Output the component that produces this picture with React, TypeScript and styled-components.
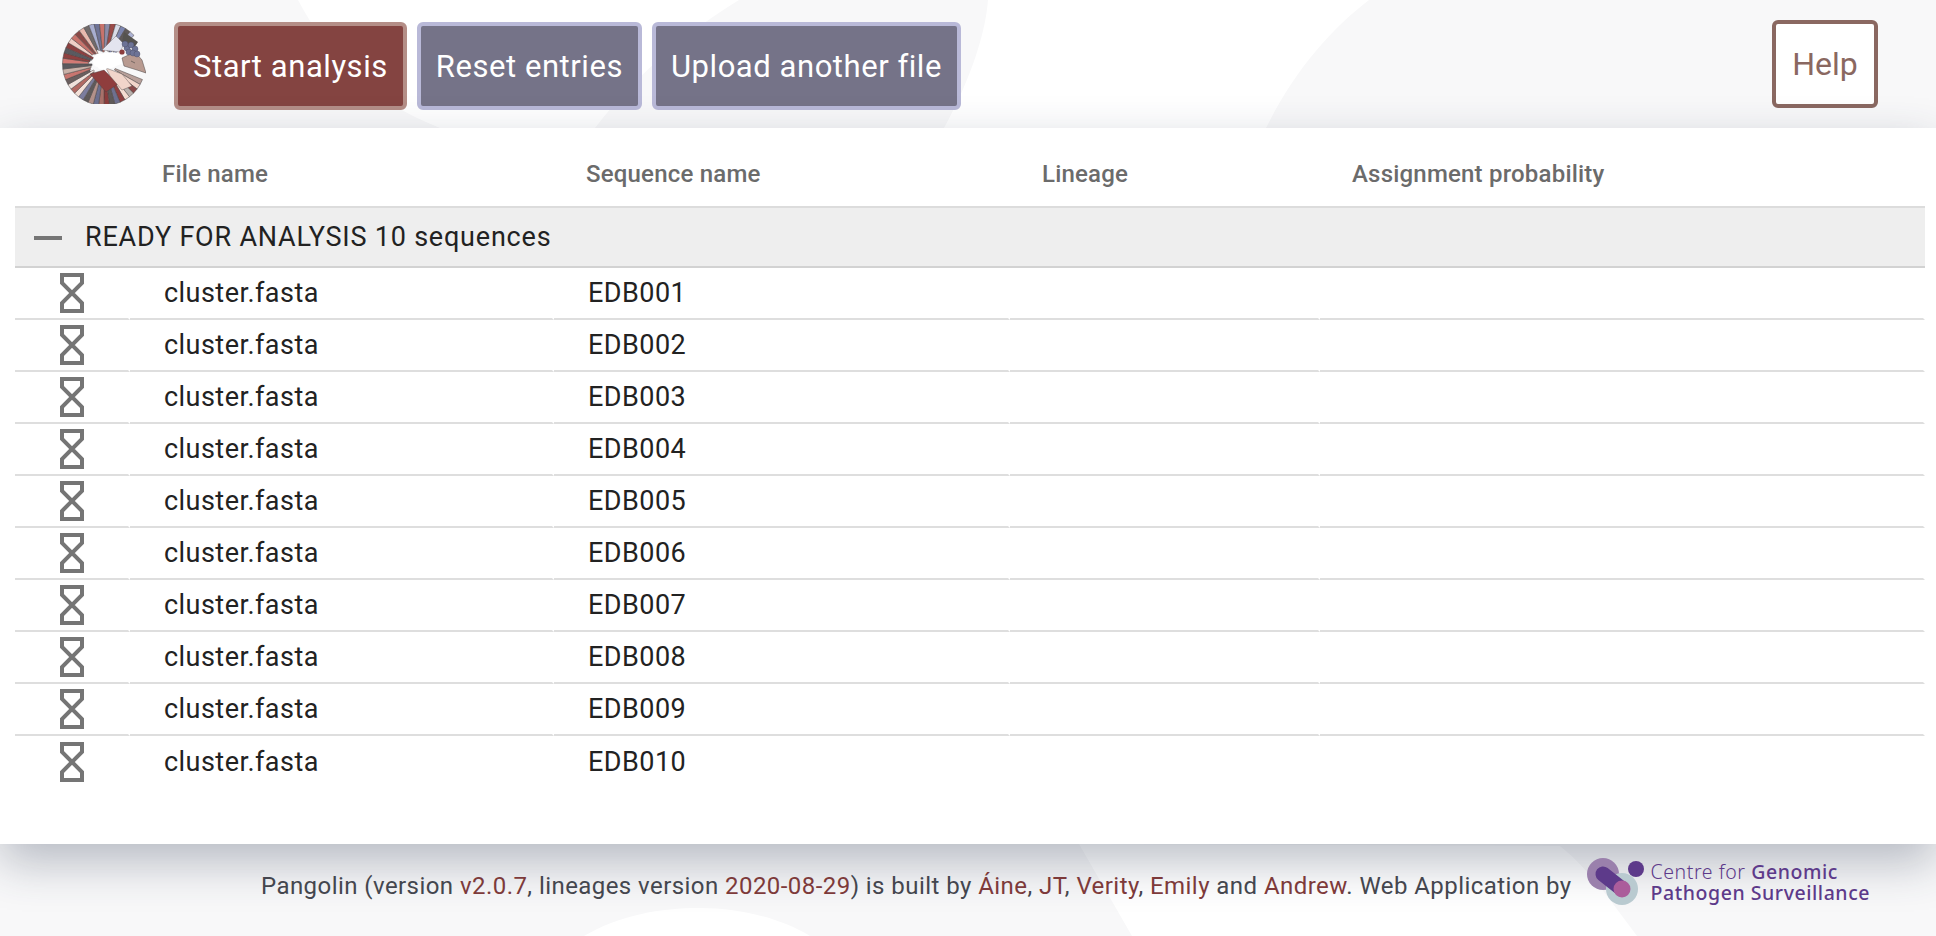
import React from "react";
import styled, { createGlobalStyle } from "styled-components";

const Global = createGlobalStyle`
  html, body { margin: 0; padding: 0; background: #fff; overflow: hidden; }
  body { font-family: Roboto, "Liberation Sans", sans-serif; }
`;

const Page = styled.div`
  position: relative;
  width: 1936px;
  height: 936px;
  display: flex;
  flex-direction: column;
  overflow: hidden;
`;

const Backdrop = styled.svg`
  position: absolute;
  inset: 0;
  width: 1936px;
  height: 936px;
`;

const Header = styled.header`
  position: relative;
  height: 128px;
  flex: none;
  display: flex;
  align-items: flex-start;
  padding: 22px 58px 0 62px;
  box-sizing: border-box;
`;

const LogoWrap = styled.div`
  width: 84px;
  height: 80px;
  margin: 2px 28px 0 0;
  flex: none;
`;

const ActionButton = styled.button<{ $tone: "red" | "slate" }>`
  height: 88px;
  padding: 0 15px;
  margin-right: 10px;
  box-sizing: border-box;
  border-radius: 6px;
  border: 4px solid ${(p) => (p.$tone === "red" ? "#b48e87" : "#b9b9d8")};
  background: ${(p) => (p.$tone === "red" ? "#844441" : "#757388")};
  color: #fff;
  font: 400 31px Roboto, sans-serif;
  letter-spacing: 0.55px;
`;

const HelpButton = styled.button`
  margin: -2px 0 0 auto;
  width: 106px;
  height: 88px;
  box-sizing: border-box;
  border-radius: 6px;
  border: 4px solid #8a6861;
  background: #fff;
  color: #8a6861;
  font: 400 32px Roboto, sans-serif;
  padding: 0;
`;

const Card = styled.main`
  position: relative;
  height: 716px;
  flex: none;
  background: #fff;
  box-shadow: 0 18px 44px rgba(45, 55, 80, 0.32);
  padding: 0 11px 0 15px;
  box-sizing: border-box;
`;

const Table = styled.table`
  width: 100%;
  border-collapse: separate;
  border-spacing: 0;
  table-layout: fixed;
`;

const HeadCell = styled.th`
  height: 80px;
  padding: 14px 0 0 32px;
  text-align: left;
  font-size: 24px;
  font-weight: 500;
  color: #6b6b6b;
  letter-spacing: 0.2px;
  border-bottom: 2px solid #dcdcdc;
  box-sizing: border-box;
`;

const GroupCell = styled.td`
  height: 60px;
  background: #eeeeee;
  border-bottom: 2px solid #d2d2d2;
  box-sizing: border-box;
  padding: 0;
`;

const GroupInner = styled.div`
  display: flex;
  align-items: center;
  font-size: 27px;
  color: #222;
  letter-spacing: 0.79px;
  padding-left: 19px;
`;

const Minus = styled.span`
  width: 28px;
  height: 4px;
  background: #757575;
  margin-right: 23px;
  position: relative;
  top: 1px;
`;

const Cell = styled.td<{ $last?: boolean }>`
  height: 52px;
  padding: 0 0 0 34px;
  font-size: 27px;
  color: #222;
  letter-spacing: 0.46px;
  box-sizing: border-box;
  border-bottom: ${(p) => (p.$last ? "none" : "2px solid #dedede")};
  border-right: 2px solid #fff;
`;

const IconCell = styled(Cell)`
  padding: 0;
  text-align: center;
`;

const Glass = styled.svg`
  display: block;
  margin: 0 0 0 45px;
`;

const Footer = styled.footer`
  position: relative;
  flex: 1;
  display: flex;
  align-items: center;
  justify-content: flex-end;
  padding: 0 66px 4px 0;
  color: #44464e;
  font-size: 24px;
  letter-spacing: 0.44px;
`;

const FootText = styled.span`
  margin-right: 15px;
  position: relative;
  top: -2px;
`;

const FootLink = styled.span`
  color: #7d3a3a;
`;

const Cgps = styled.div`
  display: flex;
  align-items: center;
  margin-top: -12px;
`;

const CgpsText = styled.div`
  font-family: "Noto Sans", sans-serif;
  font-size: 19.5px;
  line-height: 21px;
  color: #5d3a8a;
  margin-left: 2px;
  letter-spacing: 0.55px;
`;

const Thin = styled.span`
  font-weight: 300;
`;

const Strong = styled.span`
  font-weight: 500;
`;

const palette = [
  "#b8a09a","#f1d5ca","#8a4a48","#b9b0ac","#f5ddd2","#8f3f3f","#6e7090","#5f5a5a","#8c3c3c","#a9716a",
  "#6e7090","#b3918a","#5f5a5a","#7c7d9e","#f4e0d8","#b26a64","#f0e2dc","#6a5f5e","#c8766f","#c9b1a8",
  "#5b5a5e","#d27a74","#8e3f3f","#5a5a60","#8c3f3f","#f0cfc6","#c8736c","#8a4a46","#e7b9ae","#6f6a6a",
  "#a8aed0","#6e7396","#c8736c","#8c8ba8","#9a4b48","#d8dbe8","#7d86b0","#5f5a5a","#adb3d4",
];

function wedge(i: number) {
  const start = 22;
  const step = 7.55;
  const a0 = ((start + i * step) * Math.PI) / 180;
  const a1 = ((start + (i + 1) * step) * Math.PI) / 180;
  const r0 = 12 + ((i * 7) % 4) * 1.2;
  const r1 = 41.5;
  const p = (r: number, a: number) =>
    `${(42 + r * Math.cos(a)).toFixed(2)},${(40 + r * Math.sin(a)).toFixed(2)}`;
  return `${p(r0, a0)} ${p(r1, a0)} ${p(r1, a1)} ${p(r0, a1)}`;
}

const PangolinLogo = () => (
  <svg width="84" height="80" viewBox="0 0 84 80">
    <filter id="soft"><feGaussianBlur stdDeviation="0.35" /></filter>
    <g filter="url(#soft)">
      {palette.map((c, i) => (
        <polygon key={i} points={wedge(i)} fill={c} stroke="#4a4444" strokeWidth="0.5" />
      ))}
      <polygon points="28,50 42,46 56,60 44,68" fill="#8f3c3c" stroke="#4a4444" strokeWidth="0.4" />
      <polygon points="44,44 60,50 70,62 60,66 48,52" fill="#f1d5ca" stroke="#4a4444" strokeWidth="0.4" />
      <polygon points="40,26 54,12 62,20 58,28" fill="#e3e4ef" stroke="#4a4444" strokeWidth="0.3" />
      <polygon points="62,8 76,18 72,24 60,18" fill="#55524f" />
      <path d="M31 37 C31 32 36 28 40 30 C47 27 56 28 60 32 L60 40 C56 40 52 45 46 44 C40 47 36 45 36 43 C33 43 31 40 31 37 Z" fill="#fff" />
      <path d="M60 34 L73 28 L80 36 L84 49 L75 46 L62 42 Z" fill="#b89a90" stroke="#4a4444" strokeWidth="0.5" />
      {[[65,24],[69,21],[73,25],[67,28],[71,29],[75,30],[63,20]].map(([x,y],i) => (
        <circle key={i} cx={x} cy={y} r="3" fill="#6d7396" stroke="#4a4a60" strokeWidth="0.4" />
      ))}
      <circle cx="60" cy="28" r="2.6" fill="#8c3c3c" />
      <path d="M69 37 L73 39" stroke="#4a4444" strokeWidth="0.6" fill="none" />
    </g>
  </svg>
);

const CgpsMark = () => (
  <svg width="62" height="50" viewBox="0 0 62 50">
    <circle cx="16" cy="17" r="16" fill="#9a80ac" />
    <circle cx="35" cy="32" r="16" fill="#b9cad0" />
    <circle cx="49" cy="12" r="8" fill="#5d3a8a" />
    <path d="M16 17 L35 32" stroke="#5d3a8a" strokeWidth="15" strokeLinecap="round" />
    <circle cx="35" cy="32" r="8.5" fill="#ab5d9b" />
  </svg>
);

const Hourglass = () => (
  <Glass width="24" height="40" viewBox="0 0 24 40">
    <path d="M2 2H22V10L2 30V38H22V30L2 10Z" fill="none" stroke="#757575" strokeWidth="4" />
  </Glass>
);

const names = ["EDB001","EDB002","EDB003","EDB004","EDB005","EDB006","EDB007","EDB008","EDB009","EDB010"];

export default function App() {
  return (
    <Page>
      <Global />
      <Backdrop viewBox="0 0 1936 936">
        <rect width="1936" height="936" fill="#f8f8f9" />
        <path d="M298 0 C330 60 370 100 440 128 H595 C640 70 690 30 739 0 Z" fill="#fff" />
        <path d="M988 0 C985 40 965 90 944 128 H1266 C1295 70 1330 30 1369 0 Z" fill="#fff" />
        <path d="M1079 844 L1132 936 H1637 C1610 900 1590 870 1560 846 Z" fill="#fff" />
        <path d="M584 936 C620 915 660 908 700 908 C740 908 780 918 810 936 Z" fill="#fff" />
      </Backdrop>
      <Header>
        <LogoWrap><PangolinLogo /></LogoWrap>
        <ActionButton $tone="red">Start analysis</ActionButton>
        <ActionButton $tone="slate">Reset entries</ActionButton>
        <ActionButton $tone="slate">Upload another file</ActionButton>
        <HelpButton>Help</HelpButton>
      </Header>
      <Card>
        <Table>
          <colgroup>
            <col style={{ width: 115 }} />
            <col style={{ width: 424 }} />
            <col style={{ width: 456 }} />
            <col style={{ width: 310 }} />
            <col />
          </colgroup>
          <thead>
            <tr>
              <HeadCell />
              <HeadCell>File name</HeadCell>
              <HeadCell>Sequence name</HeadCell>
              <HeadCell>Lineage</HeadCell>
              <HeadCell>Assignment probability</HeadCell>
            </tr>
          </thead>
          <tbody>
            <tr>
              <GroupCell colSpan={5}>
                <GroupInner><Minus />READY FOR ANALYSIS 10 sequences</GroupInner>
              </GroupCell>
            </tr>
            {names.map((n, i) => (
              <tr key={n}>
                <IconCell $last={i === 9}><Hourglass /></IconCell>
                <Cell $last={i === 9}>cluster.fasta</Cell>
                <Cell $last={i === 9}>{n}</Cell>
                <Cell $last={i === 9} />
                <Cell $last={i === 9} />
              </tr>
            ))}
          </tbody>
        </Table>
      </Card>
      <Footer>
        <FootText>
          Pangolin (version <FootLink>v2.0.7</FootLink>, lineages version <FootLink>2020-08-29</FootLink>) is built by{" "}
          <FootLink>Áine</FootLink>, <FootLink>JT</FootLink>, <FootLink>Verity</FootLink>, <FootLink>Emily</FootLink> and{" "}
          <FootLink>Andrew</FootLink>. Web Application by
        </FootText>
        <Cgps>
          <CgpsMark />
          <CgpsText>
            <Thin>Centre for </Thin><Strong>Genomic</Strong><br />
            <Strong>Pathogen Surveillance</Strong>
          </CgpsText>
        </Cgps>
      </Footer>
    </Page>
  );
}
